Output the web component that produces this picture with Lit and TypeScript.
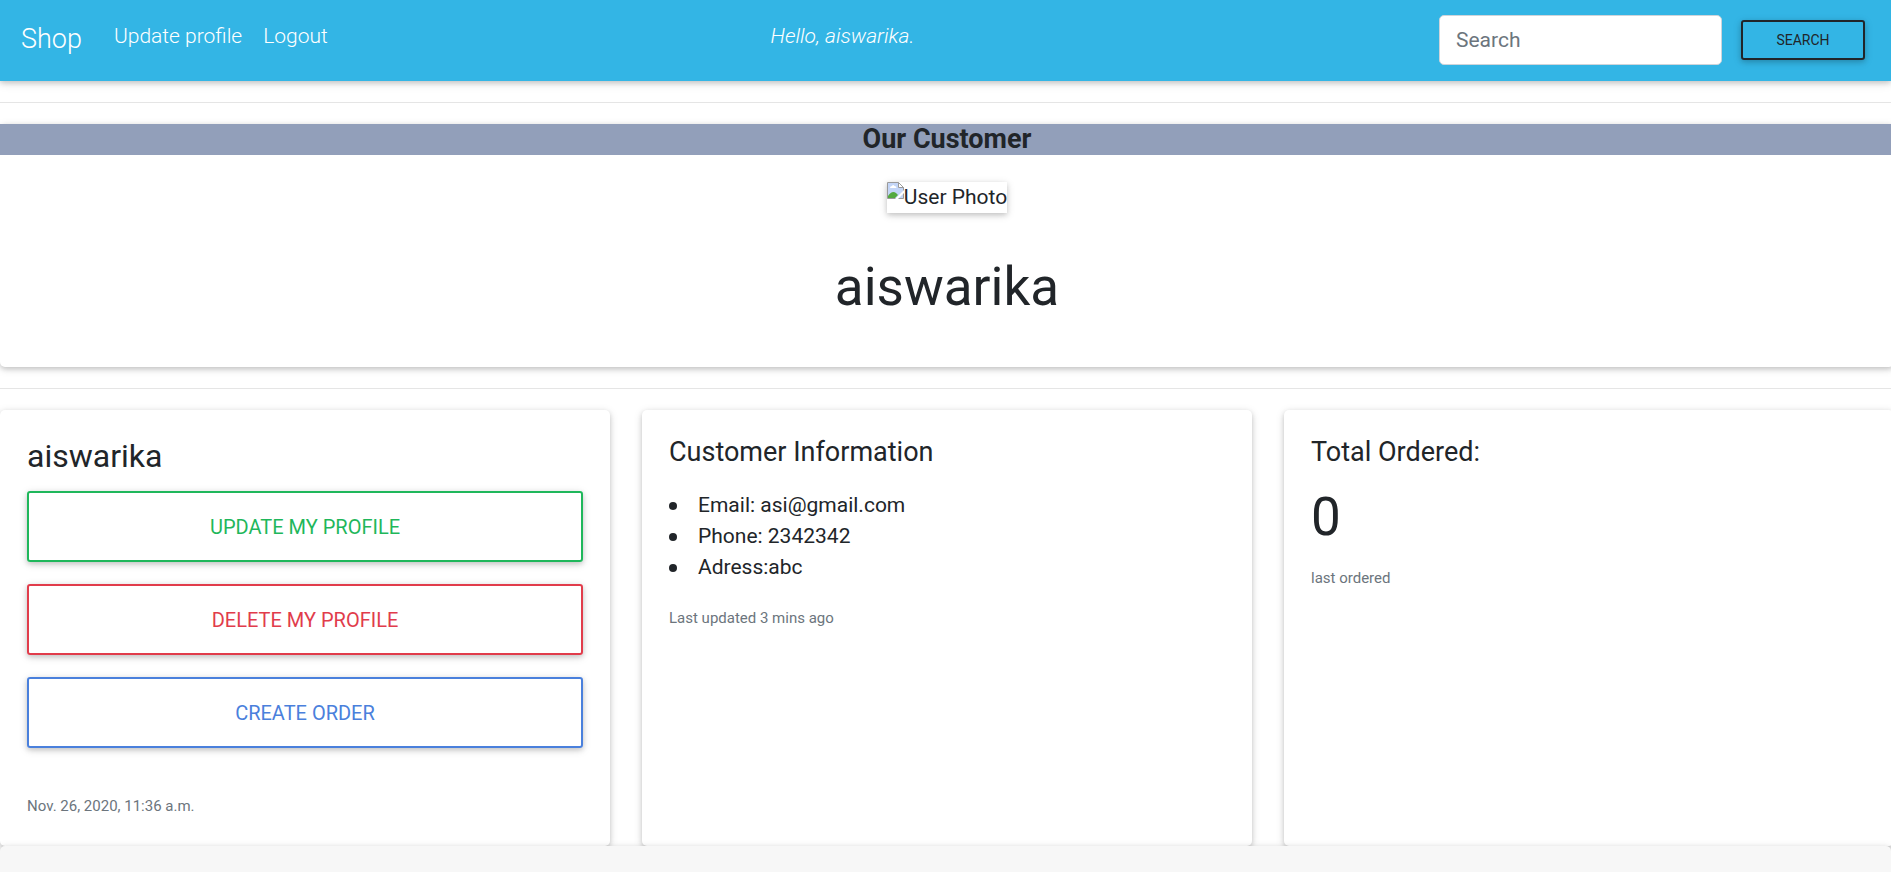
import { LitElement, html, css } from "lit";
import { customElement, property } from "lit/decorators.js";

@customElement("site-nav")
class SiteNav extends LitElement {
  @property() user = "";

  static styles = css`
    :host {
      display: block;
      position: relative;
    }
    .bar {
      display: flex;
      align-items: center;
      box-sizing: border-box;
      padding: 15px 26px 16px 21px;
      background: #33b5e5;
      box-shadow: 0 2px 5px rgba(0, 0, 0, 0.16), 0 2px 10px rgba(0, 0, 0, 0.12);
      font-weight: 300;
    }
    a {
      color: #fff;
      text-decoration: none;
    }
    .brand {
      margin: 0 32px 2px 0;
      font-size: 27px;
      line-height: 40px;
    }
    .links {
      display: flex;
      gap: 21px;
      margin: 0 0 8px;
      padding: 0;
      list-style: none;
    }
    .hello {
      flex: 1;
      margin: 0 0 8px;
      padding-right: 82px;
      color: #fff;
      font-style: italic;
      text-align: center;
    }
    .search {
      display: flex;
      align-items: center;
      gap: 19px;
    }
    input {
      box-sizing: border-box;
      width: 283px;
      height: 50px;
      padding: 0 16px;
      border: 1px solid #ced4da;
      border-radius: 5px;
      background: #fff;
      color: #495057;
      font: 400 21px/31px Roboto, sans-serif;
    }
    input::placeholder {
      color: #6c757d;
      opacity: 1;
    }
    button {
      box-sizing: border-box;
      width: 124px;
      height: 40px;
      padding: 0;
      border: 2px solid #212529;
      border-radius: 3px;
      background: transparent;
      color: #212529;
      font: 400 14px/20px Roboto, sans-serif;
      text-transform: uppercase;
      box-shadow: 0 2px 5px rgba(0, 0, 0, 0.16), 0 2px 10px rgba(0, 0, 0, 0.12);
    }
  `;

  render() {
    return html`
      <nav class="bar">
        <a class="brand" href="#">Shop</a>
        <ul class="links">
          <li><a href="#profile">Update profile</a></li>
          <li><a href="#logout">Logout</a></li>
        </ul>
        <p class="hello">Hello, ${this.user}.</p>
        <form class="search" role="search" @submit=${(e: Event) => e.preventDefault()}>
          <input type="search" placeholder="Search" aria-label="Search" />
          <button type="submit">Search</button>
        </form>
      </nav>
    `;
  }
}

@customElement("app-root")
class AppRoot extends LitElement {
  static styles = css`
    :host {
      display: flex;
      flex-direction: column;
      min-height: 100vh;
      overflow: hidden;
      background: #fff;
      color: #212529;
      font: 400 21px/31px Roboto, sans-serif;
    }
    hr {
      width: 100%;
      margin: 21px 0;
      border: 0;
      border-top: 1px solid rgba(0, 0, 0, 0.1);
    }
    h1,
    h2,
    h3,
    p,
    ul {
      margin: 0;
      font-weight: 400;
    }
    .card {
      border-radius: 5px;
      background: #fff;
      box-shadow: 0 2px 5px rgba(0, 0, 0, 0.16), 0 2px 10px rgba(0, 0, 0, 0.12);
    }
    .customer,
    .deck {
      margin-right: -3px;
    }
    .customer {
      display: flex;
      flex-direction: column;
      align-items: center;
      padding-bottom: 48px;
    }
    .banner {
      align-self: stretch;
      background: #929fba;
      font-size: 27px;
      font-weight: 700;
      line-height: 31px;
      text-align: center;
    }
    .photo {
      display: flex;
      margin: 27px 0 42px;
      box-shadow: 0 2px 5px rgba(0, 0, 0, 0.16), 0 2px 10px rgba(0, 0, 0, 0.12);
    }
    .photo svg {
      width: 17px;
      height: 17px;
    }
    .huge {
      font-size: 53px;
      line-height: 64px;
    }
    .deck {
      display: grid;
      grid-template-columns: repeat(3, 1fr);
      gap: 32px;
    }
    .panel {
      padding: 27px 27px 24px;
    }
    .name {
      margin: 2px 0 18px;
      font-size: 32px;
      line-height: 34px;
    }
    .actions {
      display: grid;
      gap: 22px;
      margin-bottom: 43px;
    }
    .action {
      height: 71px;
      padding: 0;
      border: 2px solid;
      border-radius: 3px;
      background: transparent;
      font: 400 20px/28px Roboto, sans-serif;
      text-transform: uppercase;
      box-shadow: 0 2px 5px rgba(0, 0, 0, 0.16), 0 2px 10px rgba(0, 0, 0, 0.12);
    }
    .success {
      color: #1fb75b;
    }
    .danger {
      color: #e13c4b;
    }
    .primary {
      color: #4a80dc;
    }
    .title {
      margin-bottom: 22px;
      font-size: 27px;
      line-height: 31px;
    }
    .facts {
      margin-bottom: 20px;
      padding: 0;
      list-style: none;
    }
    .facts li {
      display: flex;
      align-items: center;
      gap: 21px;
    }
    .facts li::before {
      content: "";
      width: 8px;
      height: 8px;
      border-radius: 50%;
      background: #212529;
    }
    .total {
      margin: -5px 0 14px;
    }
    .note {
      color: #6c757d;
      font-size: 15px;
      line-height: 31px;
    }
    .footer {
      flex: 1;
      border-radius: 5px 5px 0 0;
      background: #f7f7f7;
      box-shadow: 0 2px 5px rgba(0, 0, 0, 0.16), 0 2px 10px rgba(0, 0, 0, 0.12);
    }
  `;

  private user = "aiswarika";
  private facts = ["Email: asi@gmail.com", "Phone: 2342342", "Adress:abc"];
  private actions = [
    { label: "Update my profile", kind: "success" },
    { label: "Delete my profile", kind: "danger" },
    { label: "Create order", kind: "primary" },
  ];

  render() {
    return html`
      <site-nav user=${this.user}></site-nav>
      <hr />
      <section class="card customer">
        <h2 class="banner">Our Customer</h2>
        <div class="photo">
          <svg viewBox="0 0 17 17" aria-hidden="true">
            <path d="M.5.5h11l5 5v11H.5z" fill="#c3d5f7" stroke="#9a9a9a" />
            <path d="M11.5.5v5h5z" fill="#fff" stroke="#9a9a9a" />
            <path d="M3 6q0-2 2-2 1-2 2.500 0 2 0 2 2z" fill="#fff" />
            <path d="M1 16v-2q4-6 8-3l2 2-3 3z" fill="#54a93f" />
            <path d="M8 17 17 8v3l-6 6z" fill="#fff" />
          </svg>
          <span>User Photo</span>
        </div>
        <h1 class="huge">${this.user}</h1>
      </section>
      <hr />
      <main class="deck">
        <section class="card panel">
          <h2 class="name">${this.user}</h2>
          <div class="actions">
            ${this.actions.map((a) => html`<button type="button" class="action ${a.kind}">${a.label}</button>`)}
          </div>
          <p class="note">Nov. 26, 2020, 11:36 a.m.</p>
        </section>
        <section class="card panel">
          <h3 class="title">Customer Information</h3>
          <ul class="facts">
            ${this.facts.map((f) => html`<li>${f}</li>`)}
          </ul>
          <p class="note">Last updated 3 mins ago</p>
        </section>
        <section class="card panel">
          <h3 class="title">Total Ordered:</h3>
          <p class="huge total">0</p>
          <p class="note">last ordered</p>
        </section>
      </main>
      <footer class="footer"></footer>
    `;
  }
}
